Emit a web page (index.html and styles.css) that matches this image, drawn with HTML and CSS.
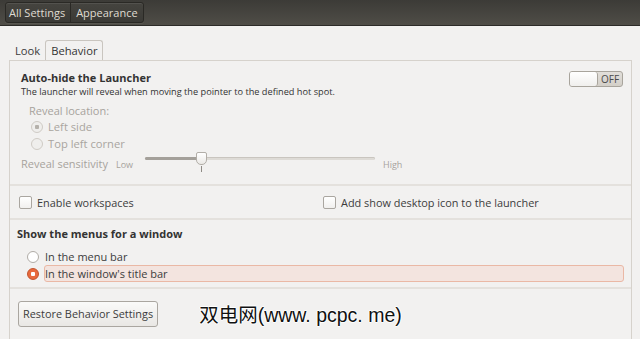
FILE: index.html
```html
<!DOCTYPE html>
<html lang="en">
<head>
  <meta charset="UTF-8" />
  <title>Appearance - Behavior</title>
  <link rel="stylesheet" href="styles.css">
</head>
<body>

<div class="topbar">
  <div class="crumbs">
    <span class="crumb">All Settings</span>
    <span class="crumb">Appearance</span>
  </div>
</div>

<div class="content">
  <div class="tabs">
    <span class="tab">Look</span>
    <span class="tab active">Behavior</span>
  </div>

  <div class="notebook">
    <!-- Launcher auto-hide -->
    <div class="section launcher">
      <div class="launcher-head">
        <div>
          <div class="heading">Auto-hide the Launcher</div>
          <div class="desc">The launcher will reveal when moving the pointer to the defined hot spot.</div>
        </div>
        <div class="switch">
          <span class="switch-knob"></span>
          <span class="switch-label">OFF</span>
        </div>
      </div>
      <div class="reveal">
        <div class="reveal-title">Reveal location:</div>
        <div class="radio-row dim"><span class="radio checked-dim"></span>Left side</div>
        <div class="radio-row dim"><span class="radio"></span>Top left corner</div>
      </div>
      <div class="sensitivity">
        <span class="sens-label">Reveal sensitivity</span>
        <span class="small">Low</span>
        <div class="slider">
          <div class="track"><div class="fill"></div></div>
          <div class="knob"></div>
          <div class="tick"></div>
        </div>
        <span class="small">High</span>
      </div>
    </div>

    <!-- Checkboxes -->
    <div class="section checks">
      <label class="check-row"><span class="checkbox"></span>Enable workspaces</label>
      <label class="check-row"><span class="checkbox"></span>Add show desktop icon to the launcher</label>
    </div>

    <!-- Menus -->
    <div class="section menus">
      <div class="heading">Show the menus for a window</div>
      <div class="radio-row"><span class="radio"></span><span class="opt">In the menu bar</span></div>
      <div class="radio-row"><span class="radio on"></span><span class="opt selected">In the window's title bar</span></div>
    </div>

    <div class="section restore">
      <button class="button">Restore Behavior Settings</button>
      <span class="watermark">双电网(www. pcpc. me)</span>
    </div>
  </div>
</div>

</body>
</html>
```

FILE: styles.css
```css
body {
  margin: 0;
  width: 640px;
  height: 339px;
  overflow: hidden;
  background: #f2f1f0;
  color: #3c3c3c;
  font-family: 'Open Sans', 'Noto Sans', sans-serif;
  font-size: 11px;
}

.topbar {
  height: 26px;
  background: linear-gradient(#3c3b37, #4f4d47);
  border-bottom: 1px solid #2c2b28;
  box-sizing: border-box;
  padding: 2px 5px 0;
}

.crumbs {
  display: inline-flex;
  height: 19px;
  border: 1px solid #2a2925;
  border-radius: 3px;
  background: linear-gradient(#45443f, #3b3a36);
  box-shadow: inset 0 1px 0 rgba(255,255,255,0.08), 0 1px 0 rgba(255,255,255,0.06);
}

.crumb {
  color: #dfdbd2;
  font-size: 11px;
  line-height: 19px;
  padding: 0 5px 0 3px;
}

.crumb + .crumb {
  border-left: 1px solid #2a2925;
  padding-left: 5px;
}

.content {
  padding: 14px 8px 0 9px;
}

.tabs {
  display: flex;
  align-items: flex-end;
  height: 20px;
}

.tab {
  padding: 0 5px 0 6px;
  height: 18px;
  line-height: 18px;
  font-size: 11.2px;
  color: #3c3c3c;
}

.tab.active {
  height: 20px;
  line-height: 20px;
  border: 1px solid #c9c5bf;
  border-bottom: none;
  border-radius: 3px 3px 0 0;
  padding: 0 4px 0 5px;
  box-sizing: border-box;
  color: #333;
}

.notebook {
  border: 1px solid #d6d2cc;
  border-bottom: none;
  height: 278px;
}

.section {
  border-bottom: 2px solid #e4e1dd;
  box-sizing: border-box;
}

.launcher {
  height: 125px;
  padding: 10px 8px 0 11px;
}

.launcher-head {
  display: flex;
  justify-content: space-between;
}

.heading {
  font-weight: bold;
  font-size: 11px;
  color: #333;
  line-height: 14px;
}

.desc {
  font-size: 9.2px;
  line-height: 13px;
  color: #333;
}

.switch {
  display: flex;
  width: 54px;
  height: 16px;
  border: 1px solid #a8a49c;
  border-radius: 3px;
  box-sizing: border-box;
  background: linear-gradient(#e2dfda, #d3cfc8);
  overflow: hidden;
}

.switch-knob {
  width: 27px;
  background: linear-gradient(#ffffff, #f0efed);
  border-right: 1px solid #a8a49c;
  border-radius: 0 3px 3px 0;
}

.switch-label {
  flex: 1;
  text-align: center;
  font-size: 10px;
  line-height: 14px;
  color: #4a4a4a;
}

.reveal {
  padding: 6px 0 0 8px;
}

.reveal-title {
  color: #a7a39d;
  line-height: 14px;
}

.radio-row {
  display: flex;
  align-items: center;
  height: 17px;
  line-height: 17px;
}

.radio-row.dim {
  color: #a9a59f;
  padding-left: 2px;
  font-size: 11.2px;
}

.radio {
  width: 10px;
  height: 10px;
  border-radius: 50%;
  border: 1px solid #b0aca6;
  background: #fff;
  margin-right: 5px;
  box-sizing: content-box;
  flex: none;
}

.dim .radio {
  border-color: #cfcbc5;
  background: #efeeec;
}

.radio.checked-dim {
  background: radial-gradient(circle, #b5b1ab 0 2px, #efeeec 2.5px);
}

.radio.on {
  border-color: #c2512a;
  background: radial-gradient(circle, #fff 0 2px, #e8693c 2.5px);
}

.sensitivity {
  display: flex;
  align-items: center;
  margin-top: 0;
  color: #a7a39d;
}

.small {
  font-size: 9px;
  margin-left: 8px;
  margin-top: 2px;
}

.slider {
  position: relative;
  width: 230px;
  height: 22px;
  margin-left: 12px;
}

.track {
  position: absolute;
  top: 5px;
  left: 0;
  right: 0;
  height: 3px;
  border-radius: 2px;
  background: #dedbd6;
  box-shadow: inset 0 1px 0 #c9c5bf;
}

.fill {
  width: 56px;
  height: 3px;
  border-radius: 2px;
  background: #a4a09a;
}

.knob {
  position: absolute;
  left: 51px;
  top: 0;
  width: 9px;
  height: 11px;
  border: 1px solid #b2aea8;
  border-radius: 2px 2px 5px 5px;
  background: linear-gradient(#ffffff, #ebe9e6);
}

.tick {
  position: absolute;
  left: 56px;
  top: 14px;
  width: 1px;
  height: 6px;
  background: #8f8b85;
}

.checks {
  height: 34px;
  display: flex;
  align-items: center;
  padding-left: 9px;
}

.check-row {
  display: flex;
  align-items: center;
  font-size: 10.9px;
  color: #3c3c3c;
  width: 304px;
}

.checkbox {
  width: 11px;
  height: 11px;
  border: 1px solid #aaa6a0;
  border-radius: 2px;
  background: linear-gradient(#ffffff, #f1f0ee);
  margin-right: 5px;
}

.menus {
  height: 69px;
  padding: 7px 7px 0 7px;
}

.menus .heading {
  margin-bottom: 7px;
}

.menus .radio-row {
  padding-left: 10px;
  font-size: 11px;
  height: 17px;
}

.opt {
  flex: 1;
  border: 1px solid transparent;
  border-radius: 3px;
  line-height: 15px;
}

.selected {
  background: #f3e4df;
  border-color: #eab8a5;
}

.restore {
  border-bottom: none;
  display: flex;
  align-items: center;
  padding: 10px 0 0 8px;
}

.button {
  height: 26px;
  padding: 0 4px;
  border: 1px solid #aaa6a0;
  border-radius: 3px;
  background: linear-gradient(#fafaf9, #e9e7e4);
  font-family: 'Open Sans', 'Noto Sans', sans-serif;
  font-size: 10.9px;
  color: #3c3c3c;
}

.watermark {
  margin-left: 41px;
  font-family: 'Liberation Sans', 'Noto Sans CJK SC', sans-serif;
  font-size: 19.5px;
  color: #111;
  text-shadow: 1px 0 #fff, -1px 0 #fff, 0 1px #fff, 0 -1px #fff;
}
```
